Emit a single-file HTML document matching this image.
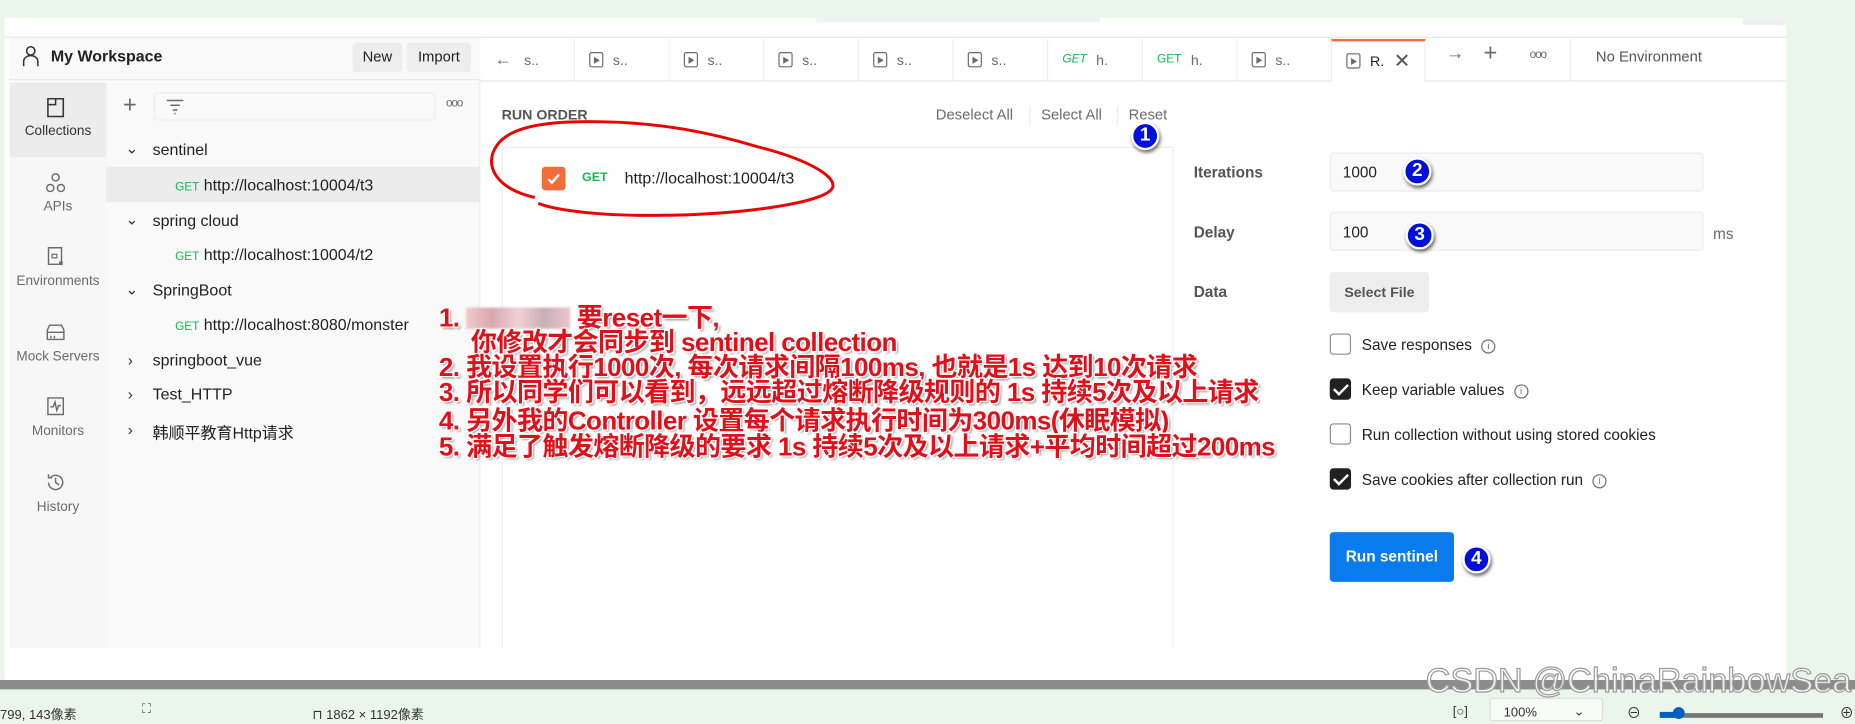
<!DOCTYPE html>
<html><head><meta charset="utf-8"><style>
*{box-sizing:border-box;margin:0;padding:0}
html,body{width:1855px;height:719px;overflow:hidden;background:#eaf6ea}
#w{position:absolute;left:0;top:0;width:1568px;height:608px;transform:scale(1.18305,1.18257);transform-origin:0 0;font-family:"Liberation Sans","Noto Sans CJK SC",sans-serif;color:#212121;font-size:13px}
.a{position:absolute;white-space:nowrap}
.g{color:#0cbb52;font-size:10px}
.tab{position:absolute;top:33px;height:35px;width:80px;border-right:1px solid #ededed;color:#6b6b6b;font-size:12px;display:flex;align-items:center;padding-left:12px}
.pi{display:inline-block;width:12px;height:13px;border:1px solid #6b6b6b;border-radius:2px;margin-right:8px;position:relative}
.pi:after{content:"";position:absolute;left:3px;top:2.5px;border-left:5px solid #6b6b6b;border-top:3.5px solid transparent;border-bottom:3.5px solid transparent}
.ri{position:absolute;left:8px;width:82px;text-align:center;color:#6b6b6b;font-size:11.5px}
.cb{position:absolute;left:1124px;width:18px;height:18px;border:1px solid #8a8a8a;border-radius:3px;background:#fff}
.cb.on{background:#212121;border-color:#212121}
.cb.on:after{content:"";position:absolute;left:5px;top:1px;width:5px;height:10px;border:solid #fff;border-width:0 2px 2px 0;transform:rotate(45deg)}
.num{position:absolute;width:24px;height:24px;border-radius:50%;background:#0010d8;border:2px solid #fff;box-shadow:1px 2px 3px rgba(0,0,0,.6);color:#fff;font-weight:bold;font-size:16px;text-align:center;line-height:20px}
.ann{position:absolute;left:371px;color:#e0101a;font-weight:bold;font-size:22px;line-height:21px;white-space:nowrap;text-shadow:1px 1px 0 #fff,-1px -1px 0 #fff,1px -1px 0 #fff,-1px 1px 0 #fff,2px 2px 2px rgba(0,0,0,.35);letter-spacing:-0.5px}
.info{display:inline-block;width:12px;height:12px;border:1px solid #6b6b6b;border-radius:50%;font-size:8px;text-align:center;line-height:10px;color:#6b6b6b;margin-left:8px;vertical-align:1px}
.u{font-size:13.5px}
</style></head><body><div id="w">
<div class="a" style="left:4px;top:15px;width:1506px;height:560px;background:#fff"></div>
<div class="a" style="left:4px;top:31px;width:1506px;height:1px;background:#e6e6e6"></div>
<div class="a" style="left:690px;top:15px;width:240px;height:4px;background:#f2f2f2"></div>
<div class="a" style="left:1473px;top:15px;width:37px;height:6px;background:#f0f0f0"></div>
<div class="a" style="left:8px;top:32px;width:398px;height:36px;background:#f9f9f9;border-bottom:1px solid #e6e6e6"></div>
<svg class="a" style="left:18px;top:38px" width="16" height="20" viewBox="0 0 16 20"><circle cx="8" cy="5" r="3.5" fill="none" stroke="#333" stroke-width="1.3"/><path d="M2 18 V14 a6 5 0 0 1 12 0 V18" fill="none" stroke="#333" stroke-width="1.3"/></svg>
<div class="a" style="left:43px;top:40px;font-size:13.5px;font-weight:bold;color:#212121">My Workspace</div>
<div class="a" style="left:298px;top:36px;width:42px;height:25px;background:#ededed;border-radius:3px;text-align:center;line-height:25px;font-size:12.5px">New</div>
<div class="a" style="left:344px;top:36px;width:54px;height:25px;background:#ededed;border-radius:3px;text-align:center;line-height:25px;font-size:12.5px">Import</div>
<div class="a" style="left:8px;top:69px;width:82px;height:479px;background:#f7f7f7"></div>
<div class="a" style="left:8px;top:70px;width:82px;height:63px;background:#ececec"></div>
<svg class="a" style="left:39px;top:82px" width="16" height="18" viewBox="0 0 16 18"><path d="M1.5 1.5h13v15h-13z M8 1.5v5 l-6.5 0" fill="none" stroke="#333" stroke-width="1.3"/></svg>
<div class="ri" style="top:105px;color:#333">Collections</div>
<svg class="a" style="left:38px;top:146px" width="18" height="18" viewBox="0 0 18 18"><circle cx="9" cy="4" r="3" fill="none" stroke="#6b6b6b" stroke-width="1.2"/><circle cx="4.5" cy="13" r="3" fill="none" stroke="#6b6b6b" stroke-width="1.2"/><circle cx="13.5" cy="13" r="3" fill="none" stroke="#6b6b6b" stroke-width="1.2"/></svg>
<div class="ri" style="top:169px">APIs</div>
<svg class="a" style="left:39px;top:208px" width="16" height="18" viewBox="0 0 16 18"><path d="M2 1.5h11v14h-11z" fill="none" stroke="#6b6b6b" stroke-width="1.2"/><rect x="5" y="7" width="4" height="3" fill="none" stroke="#6b6b6b"/><rect x="11" y="13" width="3" height="3" fill="#6b6b6b"/></svg>
<div class="ri" style="top:232px">Environments</div>
<svg class="a" style="left:38px;top:273px" width="18" height="16" viewBox="0 0 18 16"><path d="M2 6 L4 2 H14 L16 6 V14 H2Z M2 8 H16 M5 11 V13 M8 11 V13" fill="none" stroke="#6b6b6b" stroke-width="1.2"/></svg>
<div class="ri" style="top:296px">Mock Servers</div>
<svg class="a" style="left:39px;top:335px" width="16" height="17" viewBox="0 0 16 17"><path d="M1.5 1.5h13v14h-13z M3.5 9 H6 L7.5 5 L9 12 L10.5 8 H12.5" fill="none" stroke="#6b6b6b" stroke-width="1.2"/></svg>
<div class="ri" style="top:359px">Monitors</div>
<svg class="a" style="left:38px;top:399px" width="18" height="18" viewBox="0 0 18 18"><path d="M3 9 a6 6 0 1 0 2-4.5 M3 2 V5 H6 M9 5 V9 L12 11" fill="none" stroke="#6b6b6b" stroke-width="1.2"/></svg>
<div class="ri" style="top:423px">History</div>
<div class="a" style="left:90px;top:69px;width:316px;height:479px;background:#f9f9f9;border-right:1px solid #ededed"></div>
<div class="a" style="left:104px;top:78px;font-size:20px;color:#6b6b6b;font-weight:300">+</div>
<div class="a" style="left:130px;top:78px;width:238px;height:24px;border:1px solid #ededed;background:#f9f9f9;border-radius:3px"></div>
<svg class="a" style="left:140px;top:83px" width="16" height="14" viewBox="0 0 16 14"><path d="M1 2H15 M4 6H12 M6 10H10 M7.5 13H8.5" stroke="#6b6b6b" stroke-width="1.2"/></svg>
<div class="a" style="left:377px;top:82px;font-size:10px;color:#6b6b6b;letter-spacing:-1px">ooo</div>
<div class="a" style="left:90px;top:141px;width:316px;height:30px;background:#ececec"></div>
<div class="a" style="left:106px;top:118px;color:#333">⌄</div>
<div class="a u" style="left:129px;top:119px">sentinel</div>
<div class="a" style="left:148px;top:149px"><span class="g">GET</span> <span class="u">http://localhost:10004/t3</span></div>
<div class="a" style="left:106px;top:178px;color:#333">⌄</div>
<div class="a u" style="left:129px;top:179px">spring cloud</div>
<div class="a" style="left:148px;top:208px"><span class="g">GET</span> <span class="u">http://localhost:10004/t2</span></div>
<div class="a" style="left:106px;top:237px;color:#333">⌄</div>
<div class="a u" style="left:129px;top:238px">SpringBoot</div>
<div class="a" style="left:148px;top:267px"><span class="g">GET</span> <span class="u">http://localhost:8080/monster</span></div>
<div class="a" style="left:108px;top:297px;color:#333">›</div>
<div class="a u" style="left:129px;top:297px">springboot_vue</div>
<div class="a" style="left:108px;top:326px;color:#333">›</div>
<div class="a u" style="left:129px;top:326px">Test_HTTP</div>
<div class="a" style="left:108px;top:356px;color:#333">›</div>
<div class="a u" style="left:129px;top:355px">韩顺平教育Http请求</div>
<div class="a" style="left:406px;top:68px;width:1104px;height:1px;background:#e6e6e6"></div>
<div class="tab" style="left:406px"><span style="margin-right:10px;font-size:15px">←</span>s..</div>
<div class="tab" style="left:486px"><span class="pi"></span>s..</div>
<div class="tab" style="left:566px"><span class="pi"></span>s..</div>
<div class="tab" style="left:646px"><span class="pi"></span>s..</div>
<div class="tab" style="left:726px"><span class="pi"></span>s..</div>
<div class="tab" style="left:806px"><span class="pi"></span>s..</div>
<div class="tab" style="left:886px"><span class="g" style="margin-right:8px;font-style:italic">GET</span>h.</div>
<div class="tab" style="left:966px"><span class="g" style="margin-right:8px">GET</span>h.</div>
<div class="tab" style="left:1046px"><span class="pi"></span>s..</div>
<div class="tab" style="left:1125px;color:#212121;border-top:2px solid #f26b3a;height:36px;background:#fff;border-left:1px solid #ededed;border-bottom:1px solid #fff"><span class="pi"></span>R.<span style="margin-left:8px;font-size:17px;color:#555">✕</span></div>
<div class="a" style="left:1222px;top:37px;font-size:16px;color:#6b6b6b">→</div>
<div class="a" style="left:1254px;top:34px;font-size:20px;color:#6b6b6b">+</div>
<div class="a" style="left:1293px;top:41px;font-size:10px;color:#6b6b6b;letter-spacing:-1px">ooo</div>
<div class="a" style="left:1327px;top:33px;width:1px;height:35px;background:#ededed"></div>
<div class="a" style="left:1349px;top:41px;color:#555;font-size:12.5px">No Environment</div>
<div class="a" style="left:424px;top:90px;font-size:12px;color:#555;font-weight:bold">RUN ORDER</div>
<div class="a" style="left:791px;top:90px;font-size:12.5px;color:#6b6b6b">Deselect All</div>
<div class="a" style="left:870px;top:90px;width:1px;height:16px;background:#ededed"></div>
<div class="a" style="left:880px;top:90px;font-size:12.5px;color:#6b6b6b">Select All</div>
<div class="a" style="left:944px;top:90px;width:1px;height:16px;background:#ededed"></div>
<div class="a" style="left:954px;top:90px;font-size:12.5px;color:#6b6b6b">Reset</div>
<div class="a" style="left:424px;top:124px;width:568px;height:424px;border-left:1px solid #ededed;border-top:1px solid #ededed;border-right:1px solid #ededed"></div>
<div class="a" style="left:458px;top:141px;width:20px;height:20px;background:#f26b3a;border-radius:3px"></div>
<svg class="a" style="left:461px;top:144px" width="14" height="14" viewBox="0 0 14 14"><path d="M2.5 7.5 L5.5 10.5 L11.5 3.5" fill="none" stroke="#fff" stroke-width="2"/></svg>
<div class="a" style="left:492px;top:144px;font-size:10.5px;color:#0cbb52;font-weight:bold">GET</div>
<div class="a" style="left:528px;top:143px;font-size:13.5px">http://localhost:10004/t3</div>
<svg class="a" style="left:400px;top:95px" width="320" height="100" viewBox="400 95 320 100"><path d="M452 167 C420 160 408 140 420 123 C432 105 470 102 510 103 C560 104 600 112 640 124 C680 134 706 148 704 158 C700 172 620 182 560 182 C510 183 470 178 455 172" fill="none" stroke="#e00" stroke-width="2.5"/></svg>
<div class="a" style="left:1009px;top:138px;font-weight:bold;color:#555">Iterations</div>
<div class="a" style="left:1124px;top:129px;width:316px;height:33px;background:#f9f9f9;border:1px solid #ececec;border-radius:3px"></div>
<div class="a" style="left:1135px;top:138px">1000</div>
<div class="a" style="left:1009px;top:189px;font-weight:bold;color:#555">Delay</div>
<div class="a" style="left:1124px;top:179px;width:316px;height:33px;background:#f9f9f9;border:1px solid #ececec;border-radius:3px"></div>
<div class="a" style="left:1135px;top:189px">100</div>
<div class="a" style="left:1448px;top:190px;color:#6b6b6b">ms</div>
<div class="a" style="left:1009px;top:239px;font-weight:bold;color:#555">Data</div>
<div class="a" style="left:1124px;top:230px;width:84px;height:34px;background:#ededed;border-radius:3px;text-align:center;line-height:34px;font-weight:bold;color:#555;font-size:12px">Select File</div>
<div class="cb" style="top:282px"></div><div class="a" style="left:1151px;top:284px">Save responses<span class="info">i</span></div>
<div class="cb on" style="top:320px"></div><div class="a" style="left:1151px;top:322px">Keep variable values<span class="info">i</span></div>
<div class="cb" style="top:358px"></div><div class="a" style="left:1151px;top:360px">Run collection without using stored cookies</div>
<div class="cb on" style="top:396px"></div><div class="a" style="left:1151px;top:398px">Save cookies after collection run<span class="info">i</span></div>
<div class="a" style="left:1124px;top:450px;width:105px;height:42px;background:#097bed;border-radius:3px;color:#fff;font-weight:bold;text-align:center;line-height:42px">Run sentinel</div>
<div class="num" style="left:956px;top:103px">1</div>
<div class="num" style="left:1186px;top:133px">2</div>
<div class="num" style="left:1188px;top:187px">3</div>
<div class="num" style="left:1236px;top:461px">4</div>
<div class="ann" style="top:258px">1. <span style="display:inline-block;width:88px;height:18px;background:linear-gradient(90deg,#f2c8cc,#d8a8b0,#f0d0d4,#c8b0b8,#eec4c8);vertical-align:-2px;filter:blur(1px)"></span> 要reset一下,</div>
<div class="ann" style="top:279px;left:398px">你修改才会同步到 sentinel collection</div>
<div class="ann" style="top:300px">2. 我设置执行1000次, 每次请求间隔100ms, 也就是1s 达到10次请求</div>
<div class="ann" style="top:321px">3. 所以同学们可以看到，远远超过熔断降级规则的 1s 持续5次及以上请求</div>
<div class="ann" style="top:345px">4. 另外我的Controller 设置每个请求执行时间为300ms(休眠模拟)</div>
<div class="ann" style="top:367px">5. 满足了触发熔断降级的要求 1s 持续5次及以上请求+平均时间超过200ms</div>
<div class="a" style="left:0;top:575px;width:1568px;height:8px;background:#8c8c8c"></div>
<div class="a" style="left:0;top:583px;width:1568px;height:25px;background:#eaf6ea"></div>
<div class="a" style="left:0;top:596px;font-size:11px;color:#333">799, 143像素</div>
<div class="a" style="left:120px;top:594px;font-size:11px;color:#555">⛶</div>
<div class="a" style="left:264px;top:596px;font-size:11px;color:#333">⊓ 1862 × 1192像素</div>
<div class="a" style="left:1228px;top:596px;font-size:11px;color:#333">[○]</div>
<div class="a" style="left:1259px;top:590px;width:96px;height:20px;background:#f6fbf6;border:1px solid #ddd;border-radius:3px"></div>
<div class="a" style="left:1271px;top:597px;font-size:11px;color:#333">100%</div>
<div class="a" style="left:1330px;top:595px;font-size:11px;color:#333">⌄</div>
<div class="a" style="left:1375px;top:594px;font-size:12px;color:#333">⊖</div>
<div class="a" style="left:1403px;top:603px;width:138px;height:4px;background:#777"></div>
<div class="a" style="left:1403px;top:602px;width:14px;height:5px;background:#0060c0"></div>
<div class="a" style="left:1414px;top:598px;width:10px;height:10px;border-radius:50%;background:#0060c0"></div>
<div class="a" style="left:1555px;top:594px;font-size:12px;color:#333">⊕</div>
<div class="a" style="left:1205px;top:560px;font-size:29px;color:rgba(255,255,255,.85);-webkit-text-stroke:1px #999;letter-spacing:0px">CSDN @ChinaRainbowSea</div>
</div></body></html>
